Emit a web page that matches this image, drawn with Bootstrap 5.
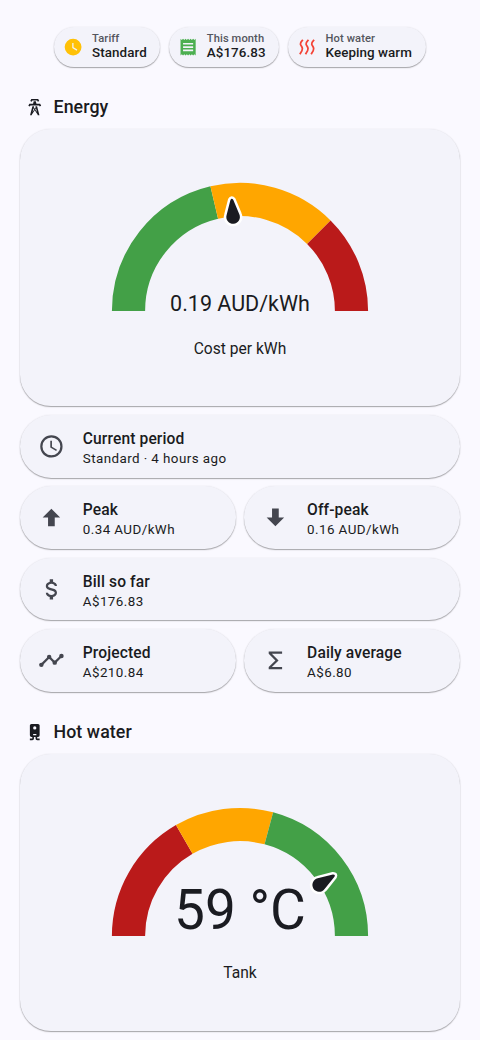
<!DOCTYPE html>
<html lang="en">
<head>
<meta charset="utf-8">
<meta name="viewport" content="width=device-width, initial-scale=1">
<title>Energy</title>
<link href="https://cdn.jsdelivr.net/npm/bootstrap@5.3.0/dist/css/bootstrap.min.css" rel="stylesheet">
<style>
:root { --ink:#1a1b21; --surface:#f3f3fa; --page:#faf9ff; --icon:#44464f; }
html, body { height:1040px; overflow:hidden; }
body { background:var(--page); color:var(--ink); font-family:Roboto,"Liberation Sans",sans-serif; }
main { padding:27px 20px 0; }
svg { display:block; flex:none; }
.surface { background:var(--surface); box-shadow:0 1px 1.2px rgba(0,0,0,.34), 0 0 2px rgba(0,0,0,.07); }
.chips { gap:8.6px; height:40px; }
.chip { height:40px; border-radius:20px; padding:0 13.7px 0 9px; gap:8.5px; }
.chip small { display:block; font-size:11.15px; line-height:12px; letter-spacing:.1px; color:#54565e; font-weight:500; }
.chip strong { display:block; font-size:13.4px; line-height:15px; letter-spacing:.07px; font-weight:500; }
.chip div { margin-top:-1px; }
.section-title { height:27px; padding-left:5px; gap:9px; }
.section-title h2 { font-size:17.8px; line-height:27px; font-weight:500; letter-spacing:.08px; margin:0; }
.energy-title { margin-top:26px; margin-bottom:9px; }
.water-title { margin-bottom:8.65px; }
.gauge-card { height:277px; border-radius:31px; padding-top:53px; }
.dial { width:258px; height:130px; }
.reading { position:absolute; left:0; right:0; text-align:center; white-space:nowrap; }
.reading-sm { font-size:21.5px; line-height:26px; bottom:-5px; }
.reading-lg { font-size:55px; line-height:60px; bottom:-3px; }
.caption-line { font-size:15.6px; line-height:22px; margin-top:25.5px; }
.tiles { display:grid; grid-template-columns:1fr 1fr; gap:8.95px 8.6px; margin:9px 0 26.5px; }
.tile { height:62.5px; border-radius:31.25px; padding-left:18px; gap:18px; }
.tile svg { color:var(--icon); }
.tile div { padding-top:4px; }
.wide { grid-column:1 / -1; }
.tile b { display:block; font-size:15.6px; line-height:21px; font-weight:500; letter-spacing:.11px; }
.tile span { display:block; font-size:13.4px; line-height:18px; letter-spacing:.42px; }
</style>
</head>
<body>
<main>
  <div class="chips d-flex justify-content-center">
    <div class="chip surface d-flex align-items-center">
      <svg width="20.2" height="20.2" viewBox="0 0 24 24" fill="#ffc107"><path d="M12,2A10,10 0 0,0 2,12A10,10 0 0,0 12,22A10,10 0 0,0 22,12A10,10 0 0,0 12,2M16.2,16.2L11,13V7H12.5V12.2L17,14.9L16.2,16.2Z"/></svg>
      <div><small>Tariff</small><strong>Standard</strong></div>
    </div>
    <div class="chip surface d-flex align-items-center">
      <svg width="20.2" height="20.2" viewBox="0 0 24 24" fill="#4caf50"><path fill-rule="evenodd" d="M3,22L4.5,20.5L6,22L7.5,20.5L9,22L10.5,20.5L12,22L13.5,20.5L15,22L16.5,20.5L18,22L19.5,20.5L21,22V2L19.5,3.5L18,2L16.5,3.5L15,2L13.5,3.5L12,2L10.5,3.5L9,2L7.5,3.5L6,2L4.5,3.5L3,2ZM18,9H6V7H18ZM18,13H6V11H18ZM18,17H6V15H18Z"/></svg>
      <div><small>This month</small><strong>A$176.83</strong></div>
    </div>
    <div class="chip surface d-flex align-items-center">
      <svg width="20.2" height="20.2" viewBox="0 0 24 24" fill="none" stroke="#f44336" stroke-width="2.1"><path d="M7,3.4C5.3,5.2 3.8,6.4 4.1,8.4C4.4,10.4 6.3,11.5 6.4,13.8C6.5,16.2 4.9,18 3.4,20.4M13.7,3.4C12,5.2 10.5,6.4 10.8,8.4C11.1,10.4 13,11.5 13.1,13.8C13.2,16.2 11.6,18 10.1,20.4M20.4,3.4C18.7,5.2 17.2,6.4 17.5,8.4C17.8,10.4 19.7,11.5 19.8,13.8C19.9,16.2 18.3,18 16.8,20.4"/></svg>
      <div><small>Hot water</small><strong>Keeping warm</strong></div>
    </div>
  </div>

  <div class="section-title energy-title d-flex align-items-center">
    <svg width="19.5" height="20" viewBox="0 0 24 24" fill="#1a1b21"><path d="M8.28,5.45L6.5,4.55L7.76,2H16.23L17.5,4.55L15.72,5.44L15,4H9L8.28,5.45M18.62,8H14.09L13.3,5H10.7L9.91,8H5.38L4.1,10.55L5.89,11.44L6.62,10H17.38L18.1,11.45L19.89,10.56L18.62,8M17.77,22H15.7L15.46,21.1L12,15.9L8.53,21.1L8.3,22H6.23L9.12,11H11.19L10.83,12.35L12,14.1L13.16,12.35L12.81,11H14.88L17.77,22M11.4,15L10.5,13.65L9.32,18.13L11.4,15M14.68,18.12L13.5,13.64L12.6,15L14.68,18.12Z"/></svg>
    <h2>Energy</h2>
  </div>
  <div class="gauge-card surface d-flex flex-column align-items-center">
    <div class="dial position-relative">
      <svg width="258" height="130" viewBox="-129 -129 258 130" fill="none">
        <g stroke-width="33.2">
          <path stroke="#43a047" d="M-111.5,0A111.5,111.5 0 0 1 -25.75,-108.49"/>
          <path stroke="#ffa600" d="M-25.75,-108.49A111.5,111.5 0 0 1 78.84,-78.84"/>
          <path stroke="#ba1a1a" d="M78.84,-78.84A111.5,111.5 0 0 1 111.5,0"/>
        </g>
        <path transform="rotate(-4.2)" fill="#1a1b21" stroke="#fff" stroke-width="5" paint-order="stroke" stroke-linejoin="round" d="M-1.4,-111.5Q0,-113.8 1.4,-111.5L6.4,-96.5A6.8,6.8 0 1 1 -6.4,-96.5Z"/>
      </svg>
      <div class="reading reading-sm">0.19 AUD/kWh</div>
    </div>
    <div class="caption-line">Cost per kWh</div>
  </div>

  <div class="tiles">
    <div class="tile wide surface d-flex align-items-center">
      <svg width="26.8" height="26.8" viewBox="0 0 24 24" fill="currentColor"><path d="M12,20A8,8 0 0,0 20,12A8,8 0 0,0 12,4A8,8 0 0,0 4,12A8,8 0 0,0 12,20M12,2A10,10 0 0,1 22,12A10,10 0 0,1 12,22C6.47,22 2,17.5 2,12A10,10 0 0,1 12,2M12.5,7V12.25L17,14.92L16.25,16.15L11,13V7H12.5Z"/></svg>
      <div><b>Current period</b><span>Standard · 4 hours ago</span></div>
    </div>
    <div class="tile surface d-flex align-items-center">
      <svg width="26.8" height="26.8" viewBox="0 0 24 24" fill="currentColor"><path d="M15,20H9V12H4.16L12,4.16L19.84,12H15V20Z"/></svg>
      <div><b>Peak</b><span>0.34 AUD/kWh</span></div>
    </div>
    <div class="tile surface d-flex align-items-center">
      <svg width="26.8" height="26.8" viewBox="0 0 24 24" fill="currentColor"><path d="M9,4H15V12H19.84L12,19.84L4.16,12H9V4Z"/></svg>
      <div><b>Off-peak</b><span>0.16 AUD/kWh</span></div>
    </div>
    <div class="tile wide surface d-flex align-items-center">
      <svg width="26.8" height="26.8" viewBox="0 0 24 24" fill="currentColor"><path d="M7,15H9C9,16.08 10.37,17 12,17C13.63,17 15,16.08 15,15C15,13.9 13.96,13.5 11.76,12.97C9.64,12.44 7,11.78 7,9C7,7.21 8.47,5.69 10.5,5.18V3H13.5V5.18C15.53,5.69 17,7.21 17,9H15C15,7.92 13.63,7 12,7C10.37,7 9,7.92 9,9C9,10.1 10.04,10.5 12.24,11.03C14.36,11.56 17,12.22 17,15C17,16.79 15.53,18.31 13.5,18.82V21H10.5V18.82C8.47,18.31 7,16.79 7,15Z"/></svg>
      <div><b>Bill so far</b><span>A$176.83</span></div>
    </div>
    <div class="tile surface d-flex align-items-center">
      <svg width="26.8" height="26.8" viewBox="0 0 24 24" fill="currentColor"><path d="M3,16L10,9L15,14L21,8" fill="none" stroke="currentColor" stroke-width="2"/><circle cx="3" cy="16" r="2"/><circle cx="10" cy="9" r="2"/><circle cx="15" cy="14" r="2"/><circle cx="21" cy="8" r="2"/></svg>
      <div><b>Projected</b><span>A$210.84</span></div>
    </div>
    <div class="tile surface d-flex align-items-center">
      <svg width="26.8" height="26.8" viewBox="0 0 24 24" fill="currentColor"><path d="M18,6H8.83L14.83,12L8.83,18H18V20H6V18L12,12L6,6V4H18V6Z"/></svg>
      <div><b>Daily average</b><span>A$6.80</span></div>
    </div>
  </div>

  <div class="section-title water-title d-flex align-items-center">
    <svg width="19.5" height="20" viewBox="0 0 24 24" fill="#1a1b21"><path fill-rule="evenodd" d="M8,2C6.89,2 6,2.89 6,4V16A2,2 0 0,0 8,18H9V20H6V22H9C10.11,22 11,21.11 11,20V18H13V20A2,2 0 0,0 15,22H18V20H15V18H16A2,2 0 0,0 18,16V4C18,2.89 17.1,2 16,2H8M12,4.97A2,2 0 0,1 14,6.97A2,2 0 0,1 12,8.97A2,2 0 0,1 10,6.97A2,2 0 0,1 12,4.97M10,14.5H14V16H10V14.5Z"/></svg>
    <h2>Hot water</h2>
  </div>
  <div class="gauge-card surface d-flex flex-column align-items-center">
    <div class="dial position-relative">
      <svg width="258" height="130" viewBox="-129 -129 258 130" fill="none">
        <g stroke-width="33.2">
          <path stroke="#ba1a1a" d="M-111.5,0A111.5,111.5 0 0 1 -55.75,-96.56"/>
          <path stroke="#ffa600" d="M-55.75,-96.56A111.5,111.5 0 0 1 28.86,-107.7"/>
          <path stroke="#43a047" d="M28.86,-107.7A111.5,111.5 0 0 1 111.5,0"/>
        </g>
        <path transform="rotate(57.2)" fill="#1a1b21" stroke="#fff" stroke-width="5" paint-order="stroke" stroke-linejoin="round" d="M-1.4,-111.5Q0,-113.8 1.4,-111.5L6.4,-96.5A6.8,6.8 0 1 1 -6.4,-96.5Z"/>
      </svg>
      <div class="reading reading-lg">59 °C</div>
    </div>
    <div class="caption-line">Tank</div>
  </div>
</main>
<script src="https://cdn.jsdelivr.net/npm/bootstrap@5.3.0/dist/js/bootstrap.bundle.min.js"></script>
</body>
</html>
